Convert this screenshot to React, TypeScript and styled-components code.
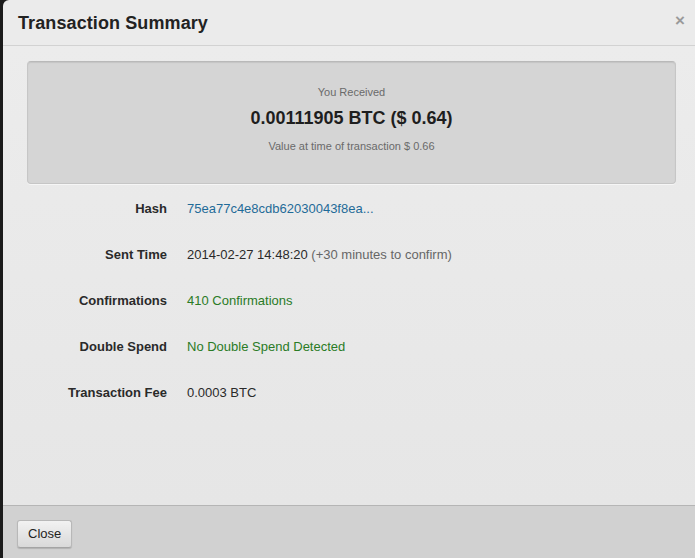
import React from "react";
import styled, { createGlobalStyle } from "styled-components";

const GlobalStyle = createGlobalStyle`
  html, body {
    margin: 0;
    padding: 0;
    background: #1b1b1b;
  }
  body {
    font-family: "Liberation Sans", Arial, sans-serif;
  }
`;

const Modal = styled.div`
  margin-left: 3px;
  width: 692px;
  height: 558px;
  display: flex;
  flex-direction: column;
  background: #ebebeb;
  border-top-left-radius: 6px;
  overflow: hidden;
`;

const Header = styled.div`
  height: 46px;
  flex-shrink: 0;
  display: flex;
  align-items: center;
  justify-content: space-between;
  padding: 1px 10px 0 15px;
  box-sizing: border-box;
  border-bottom: 1px solid #d2d2d2;
  box-shadow: 0 1px 0 #f8f8f8;
`;

const Title = styled.h3`
  margin: 0;
  font-size: 18px;
  font-weight: bold;
  color: #222;
  letter-spacing: 0.1px;
`;

const CloseX = styled.span`
  font-size: 17px;
  font-weight: bold;
  color: #9a9a9a;
  line-height: 1;
  margin-top: -6px;
`;

const Body = styled.div`
  flex: 1;
  padding: 15px 19px 0 24px;
  background: linear-gradient(#ececec, #e6e6e6);
`;

const SummaryBox = styled.div`
  height: 123px;
  box-sizing: border-box;
  border: 1px solid #c6c6c6;
  border-top-color: #b9b9b9;
  border-radius: 4px;
  background: #d5d5d5;
  box-shadow: inset 0 1px 1px rgba(0, 0, 0, 0.08), 0 1px 0 #f6f6f6;
  display: flex;
  flex-direction: column;
  align-items: center;
  padding-top: 23px;
`;

const SmallText = styled.div`
  font-size: 11px;
  color: #6a6a6a;
  line-height: 14px;
`;

const Amount = styled.div`
  font-size: 18px;
  font-weight: bold;
  color: #1e1e1e;
  line-height: 22px;
  margin: 8px 0 10px;
`;

const Details = styled.div`
  margin-top: 15px;
  display: flex;
  flex-direction: column;
  gap: 26px;
`;

const Row = styled.div`
  display: grid;
  grid-template-columns: 140px 1fr;
  column-gap: 20px;
  font-size: 13px;
  line-height: 20px;
`;

const Label = styled.div`
  text-align: right;
  font-weight: bold;
  color: #2a2a2a;
`;

const Value = styled.div<{ tone?: "link" | "good" }>`
  color: ${(p) => (p.tone === "link" ? "#1f6b98" : p.tone === "good" ? "#2a7b26" : "#2a2a2a")};
`;

const Muted = styled.span`
  color: #666;
`;

const Footer = styled.div`
  height: 52px;
  flex-shrink: 0;
  border-top: 1px solid #b5b5b5;
  background: #d1d1d1;
  display: flex;
  align-items: center;
  padding: 0 14px;
`;

const Button = styled.button`
  font-family: "Liberation Sans", Arial, sans-serif;
  font-size: 13px;
  color: #222;
  height: 28px;
  padding: 0 10px;
  border: 1px solid #b8b8b8;
  border-bottom-color: #a4a4a4;
  border-radius: 3px;
  background: linear-gradient(#f2f2f2, #d9d9d9);
  box-shadow: 0 1px 1px rgba(0, 0, 0, 0.15);
  margin-top: 3px;
`;

const rows = [
  { label: "Hash", value: <Value tone="link">75ea77c4e8cdb62030043f8ea...</Value> },
  {
    label: "Sent Time",
    value: (
      <Value>
        2014-02-27 14:48:20 <Muted>(+30 minutes to confirm)</Muted>
      </Value>
    ),
  },
  { label: "Confirmations", value: <Value tone="good">410 Confirmations</Value> },
  { label: "Double Spend", value: <Value tone="good">No Double Spend Detected</Value> },
  { label: "Transaction Fee", value: <Value>0.0003 BTC</Value> },
];

export default function App() {
  return (
    <>
      <GlobalStyle />
      <Modal>
        <Header>
          <Title>Transaction Summary</Title>
          <CloseX>×</CloseX>
        </Header>
        <Body>
          <SummaryBox>
            <SmallText>You Received</SmallText>
            <Amount>0.00111905 BTC ($ 0.64)</Amount>
            <SmallText>Value at time of transaction $ 0.66</SmallText>
          </SummaryBox>
          <Details>
            {rows.map((r) => (
              <Row key={r.label}>
                <Label>{r.label}</Label>
                {r.value}
              </Row>
            ))}
          </Details>
        </Body>
        <Footer>
          <Button>Close</Button>
        </Footer>
      </Modal>
    </>
  );
}
